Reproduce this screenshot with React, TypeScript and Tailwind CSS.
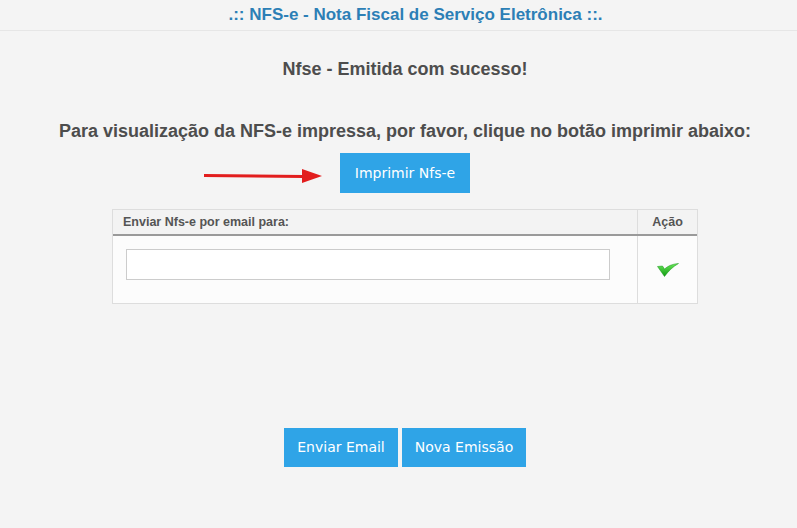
import { useState } from "react"

const CheckIcon = () => (
  <svg width="22" height="16" viewBox="0 0 22 16">
    <defs>
      <linearGradient id="chk" x1="0" y1="0" x2="0" y2="1">
        <stop offset="0" stopColor="#6be85a" />
        <stop offset="1" stopColor="#0f9a10" />
      </linearGradient>
    </defs>
    <path d="M0.5 5.5 L5.5 5 L7.5 8 C11 5 15 3 21.5 2.5 C15.5 6 11.5 10 7.5 15.5 Z" fill="url(#chk)" stroke="#17951a" strokeWidth="0.5" />
  </svg>
)

const Arrow = () => (
  <svg width="118" height="14" viewBox="0 0 118 14">
    <line x1="0" y1="6.5" x2="100" y2="7.5" stroke="#e21d1d" strokeWidth="3" />
    <polygon points="98,0 118,7 98,14" fill="#e21d1d" />
  </svg>
)

export default function App() {
  const [email, setEmail] = useState("")

  return (
    <div className="min-h-[528px] w-full bg-[#f4f4f4] font-['Liberation_Sans',Arial,sans-serif] text-[#4d4d4d]">
      {/* Header */}
      <div className="flex h-[31px] items-center justify-center border-b border-[#e6e6e6] pl-[34px]">
        <h1 className="text-[17px] font-bold text-[#2c7fb6]">.:: NFS-e - Nota Fiscal de Serviço Eletrônica ::.</h1>
      </div>

      <div className="flex flex-col items-center pl-[13px]">
        <h2 className="mt-[25px] text-[18px] font-bold">Nfse - Emitida com sucesso!</h2>
        <p className="mt-[35px] text-[18px] font-bold">
          Para visualização da NFS-e impressa, por favor, clique no botão imprimir abaixo:
        </p>

        <div className="relative mt-[8px]">
          <div className="absolute right-full top-[16px] mr-[18px]">
            <Arrow />
          </div>
          <button className="h-[40px] w-[130px] bg-[#2fa4e7] font-['DejaVu_Sans',Verdana,sans-serif] text-[14px] text-white">
            Imprimir Nfs-e
          </button>
        </div>

        {/* Email table */}
        <div className="mt-[16px] w-[586px] border border-[#dddddd] bg-[#fcfcfc]">
          <div className="flex h-[26px] border-b-2 border-[#9a9a9a] bg-[#f3f3f3] text-[12.5px] font-bold text-[#555]">
            <div className="flex flex-1 items-center border-r border-[#dddddd] pl-[10px]">Enviar Nfs-e por email para:</div>
            <div className="flex w-[59px] items-center justify-center">Ação</div>
          </div>
          <div className="flex h-[67px]">
            <div className="flex-1 border-r border-[#dddddd] pl-[13px] pt-[13px]">
              <input
                value={email}
                onChange={(e) => setEmail(e.target.value)}
                className="h-[31px] w-[484px] border border-[#cccccc] bg-white px-2 text-[13px] outline-none"
              />
            </div>
            <div className="flex w-[59px] items-center justify-center pb-[2px]">
              <CheckIcon />
            </div>
          </div>
        </div>

        {/* Actions */}
        <div className="mt-[124px] flex gap-[4px]">
          <button className="h-[39px] w-[114px] bg-[#2fa4e7] font-['DejaVu_Sans',Verdana,sans-serif] text-[14px] text-white">
            Enviar Email
          </button>
          <button className="h-[39px] w-[124px] bg-[#2fa4e7] font-['DejaVu_Sans',Verdana,sans-serif] text-[14px] text-white">
            Nova Emissão
          </button>
        </div>
      </div>
    </div>
  )
}
